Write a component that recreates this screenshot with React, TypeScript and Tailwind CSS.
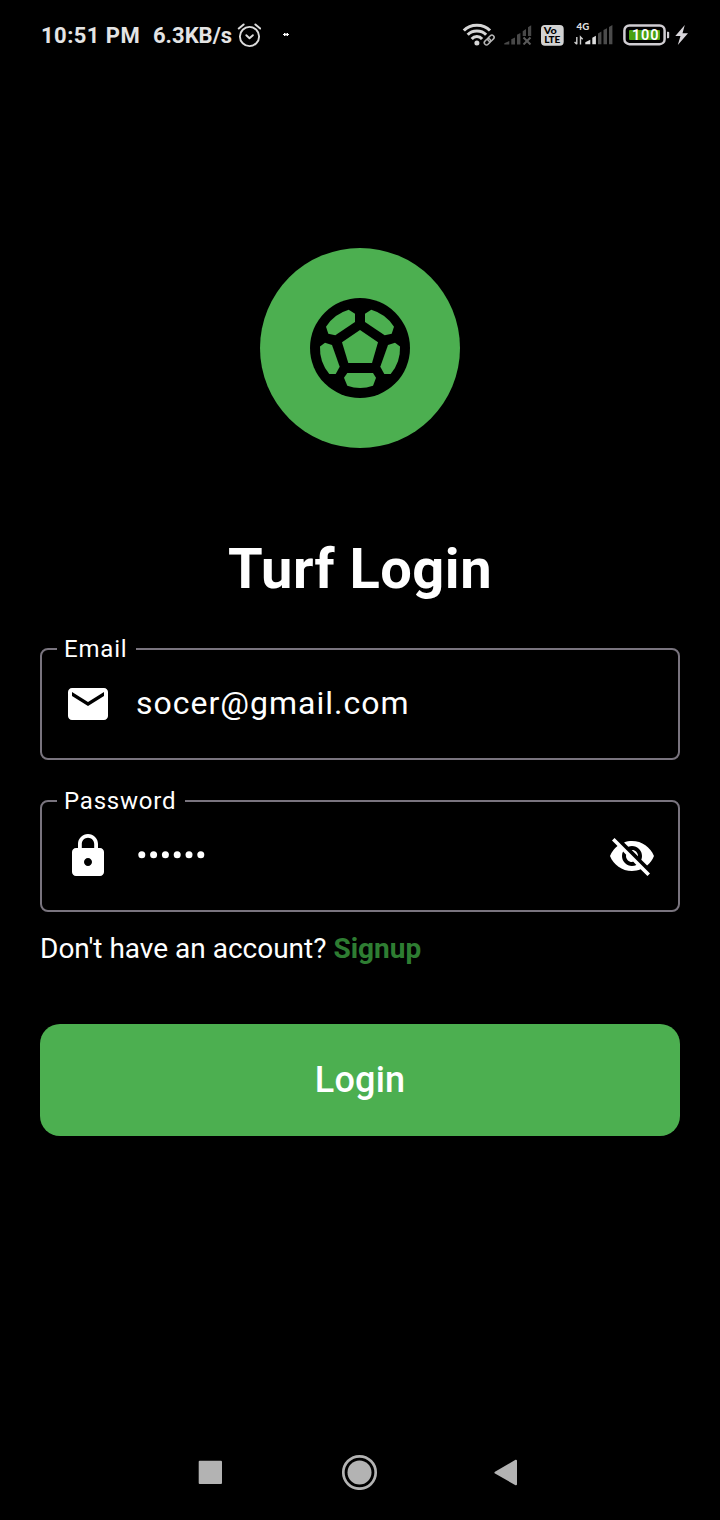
import type { ReactNode } from "react";
import { MdEmail, MdLock, MdVisibilityOff } from "react-icons/md";

function AlarmIcon() {
  return (
    <svg width="24" height="26" viewBox="0 0 24 26" fill="none" stroke="#dcdcdc" strokeLinecap="round">
      <circle cx="12.500" cy="14.500" r="9.600" strokeWidth="1.900" />
      <path d="M9.300 13.200l3.200 3 3.400-3" strokeWidth="1.900" strokeLinejoin="round" />
      <path d="M1.800 6.500l4.800-4M23.200 6.500l-4.800-4" strokeWidth="2" />
    </svg>
  );
}

function WifiIcon() {
  return (
    <svg className="overflow-visible" width="33" height="24" viewBox="0 0 33 24" fill="none">
      <g stroke="#d6d6d6" strokeWidth="3">
        <path d="M.800 7.600C7.500.300 20.300.300 27 7.600" />
        <path d="M4.700 11.800c4.600-5 13.800-5 18.400 0" />
        <path d="M8.700 16c2.700-3.200 7.700-3.200 10.400 0" />
      </g>
      <circle cx="13.900" cy="19.900" r="2.500" fill="#d6d6d6" />
      <g stroke="#b4b4b4" strokeWidth="1.500" transform="rotate(-45 26.200 17)">
        <rect x="20.200" y="14.800" width="7" height="4.400" rx="2.200" />
        <rect x="25.200" y="14.800" width="7" height="4.400" rx="2.200" />
      </g>
    </svg>
  );
}

function NoSignalIcon() {
  return (
    <svg width="28" height="20" viewBox="0 0 28 20" fill="#484848">
      <path d="M.300 19.600v-1.400l5-2.200v3.600zM7.300 19.600v-5.400l3.700-1.800v7.200zM13 19.600V9.800L16.400 8v11.600zM18.700 11V6.200L22 4v7zM24 11V2.300L27.200.300V11z" />
      <path d="M19.500 12.500l7 7M26.500 12.500l-7 7" stroke="#5a5a5a" strokeWidth="2" />
    </svg>
  );
}

function VolteIcon() {
  return (
    <svg width="23" height="21" viewBox="0 0 23 21" fontFamily="Lato, sans-serif" fontWeight="900">
      <rect width="22.700" height="20.700" rx="4" fill="#d2d2d2" />
      <text x="2.800" y="9.400" fontSize="8.500" textLength="13" lengthAdjust="spacingAndGlyphs">Vo</text>
      <text x="3.200" y="18" fontSize="8.600" textLength="16.200" lengthAdjust="spacingAndGlyphs">LTE</text>
    </svg>
  );
}

function MobileSignalIcon() {
  return (
    <svg width="39" height="30" viewBox="0 0 39 30">
      <text x="2.600" y="10.200" fontSize="9.500" fontFamily="Lato, sans-serif" fontWeight="900" fill="#dedede" textLength="12.600" lengthAdjust="spacingAndGlyphs">4G</text>
      <path d="M2.800 17v7.300M.600 22l2.200 2.200M6.500 24.500V17l2.200 2.200" fill="none" stroke="#cfcfcf" strokeWidth="1.400" />
      <path d="M11.300 24.300v-2l5-2.500v4.500zM18.300 24.300v-6.600l3.600-1.900v8.500z" fill="#dedede" />
      <path d="M24 24.300V13.400l3.400-1.900v12.800zM29.500 24.300V10.100L33 8.200v16.100zM35 24.300V7l3.400-2v19.300z" fill="#4b4b4b" />
    </svg>
  );
}

function BatteryIcon() {
  return (
    <svg width="47" height="22" viewBox="0 0 47 22">
      <rect x="1.400" y="1.400" width="40.200" height="18.800" rx="5" fill="none" stroke="#d0cdd2" strokeWidth="2.500" />
      <rect x="6" y="6" width="31" height="10" rx="1" fill="#48a111" />
      <path d="M44 7.800h1.200a1 1 0 0 1 1 1v4.400a1 1 0 0 1-1 1H44z" fill="#d0cdd2" />
      <text x="9" y="16" fontSize="14.500" fontFamily="Roboto, sans-serif" fontWeight="600" fill="#fff" textLength="26.500">100</text>
    </svg>
  );
}

function BoltIcon() {
  return (
    <svg width="14" height="20" viewBox="0 0 14 20" fill="#d9d6db">
      <path d="M9.800 0L.300 11h5.200L2.800 20 13 8.200H7.500z" />
    </svg>
  );
}

function StatusBar() {
  return (
    <header className="flex h-[70px] items-center pl-[41px] text-[22px] font-bold text-[#e4e4e4]">
      <span className="w-[112px] whitespace-nowrap tracking-[0.45px]">10:51 PM</span>
      <span className="w-[84px] whitespace-nowrap">6.3KB/s</span>
      <AlarmIcon />
      <svg className="ml-[22px]" width="6" height="4" viewBox="0 0 6 4" fill="#fff">
        <path d="M1 0h1v.500h2V0h1v1h1v1H5v1H4v-.500H2V3H1V2H0V1h1z" />
      </svg>
      <div className="ml-[174px] flex items-center">
        <WifiIcon />
        <span className="ml-2"><NoSignalIcon /></span>
        <span className="ml-[9px]"><VolteIcon /></span>
        <span className="ml-[10px]"><MobileSignalIcon /></span>
        <span className="ml-[10px]"><BatteryIcon /></span>
        <span className="ml-[5px]"><BoltIcon /></span>
      </div>
    </header>
  );
}

function SoccerBall() {
  const side = (
    <>
      <path d="M55 15.700L61.300 11.700A40 40 0 0 1 84 28.700L81.700 35.700 74.700 37.300 55 24z" />
      <path d="M78 47L85 44.700 90 48.500A40 40 0 0 1 80.700 76L74.300 76 70.300 68.700z" />
    </>
  );
  return (
    <svg width="100" height="100" viewBox="0 0 100 100" fill="#4caf50">
      <circle cx="50" cy="50" r="50" fill="#000" />
      <path d="M50 32l18 12.300L62 65H38.300L32 44.300z" />
      <path d="M37.300 75H63L66 79.700 63 87.700A40 40 0 0 1 37.300 87.700L34 79.700z" />
      {side}
      <g transform="translate(100 0) scale(-1 1)">{side}</g>
    </svg>
  );
}

type FieldProps = { label: string; icon: ReactNode; children: ReactNode; trailing?: ReactNode };

function Field({ label, icon, children, trailing }: FieldProps) {
  return (
    <div className="relative flex h-28 items-center rounded-lg border-2 border-[#79747e] px-[22px]">
      <span className="absolute -top-[15px] left-[15px] bg-black pr-[9px] pl-[7px] text-2xl leading-7 tracking-[0.8px]">
        {label}
      </span>
      {icon}
      <div className="ml-6 flex-1 text-[32px] leading-10 tracking-[1px]">{children}</div>
      {trailing}
    </div>
  );
}

function NavigationBar() {
  return (
    <nav className="mt-auto flex h-24 items-center pl-[198px]">
      <svg width="24" height="24" viewBox="0 0 24 24">
        <rect x=".700" y=".700" width="23.300" height="23.300" rx="1" fill="#b3b3b3" />
      </svg>
      <svg className="ml-[119px]" width="37" height="36" viewBox="0 0 37 36">
        <circle cx="18.500" cy="18.500" r="16.200" fill="none" stroke="#b3b3b3" strokeWidth="2.700" />
        <circle cx="18.500" cy="18.500" r="12" fill="#b3b3b3" />
      </svg>
      <svg className="ml-[115px]" width="25" height="28" viewBox="0 0 25 28">
        <path d="M2.500 14.600L23 2.700v23.600z" fill="#b3b3b3" stroke="#b3b3b3" strokeWidth="2" strokeLinejoin="round" />
      </svg>
    </nav>
  );
}

export default function App() {
  return (
    <div className="flex h-[1520px] w-[720px] flex-col overflow-hidden bg-black font-['Roboto',sans-serif] text-white">
      <StatusBar />
      <main className="flex flex-col px-10 pt-[178px]">
        <div className="flex size-[200px] items-center justify-center self-center rounded-full bg-[#4caf50]">
          <SoccerBall />
        </div>
        <h1 className="mt-[88px] text-center text-[56px] leading-[66px] font-bold tracking-[0.5px]">Turf Login</h1>
        <div className="mt-[46px] flex flex-col gap-10">
          <Field label="Email" icon={<MdEmail size={48} />}>
            <p className="-mt-0.5">socer@gmail.com</p>
          </Field>
          <Field
            label="Password"
            icon={<MdLock size={48} />}
            trailing={<MdVisibilityOff size={48} />}
          >
            <svg width="71" height="10" viewBox="0 0 71 10" fill="currentColor">
              {[0, 1, 2, 3, 4, 5].map((i) => (
                <circle key={i} cx={5.8 + i * 11.8} cy="3.700" r="3.500" />
              ))}
            </svg>
          </Field>
        </div>
        <p className="mt-5 text-[28px] leading-[33px]">
          Don't have an account? <a className="font-bold text-[#2e7d32]">Signup</a>
        </p>
        <button className="mt-[59px] h-28 rounded-[20px] bg-[#4caf50] text-4xl font-medium tracking-[0.2px]">
          Login
        </button>
      </main>
      <NavigationBar />
    </div>
  );
}
